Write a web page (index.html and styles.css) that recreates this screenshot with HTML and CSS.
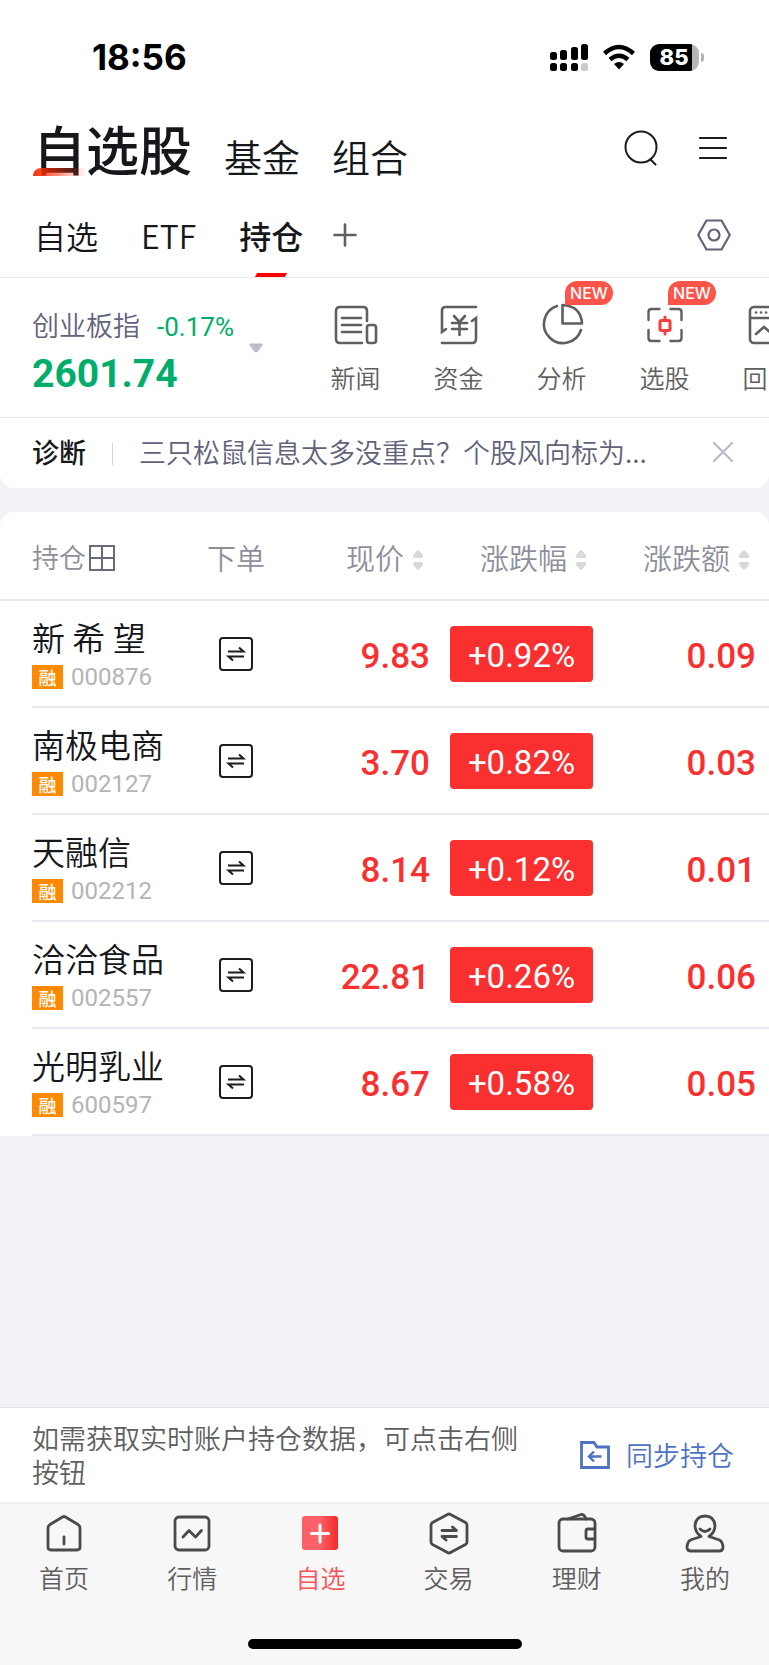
FILE: index.html
```
<!DOCTYPE html>
<html lang="zh-CN">
<head>
    <meta charset="utf-8">
    <meta name="viewport" content="width=device-width, initial-scale=1">

    <title>自选股</title>

    <link rel="stylesheet" href="styles.css">
</head>
<body>
    <!-- shared icons for the table -->
    <svg width="0" height="0" class="sprite">
        <symbol id="order" viewBox="0 0 34 34">
            <rect x="1" y="1" width="32" height="32" rx="3" fill="none" stroke="#1b1c20" stroke-width="2"/>
            <path d="M9 14.500h15.500l-4.500-4M25 19.500H9.500l4.500 4" fill="none" stroke="#1b1c20" stroke-width="2"/>
        </symbol>
        <symbol id="sort" viewBox="0 0 10 20">
            <path d="M3.500 1q1.500-1.300 3 0l3 3.500Q11 8 8 8H2Q-1 8 .5 4.500zM3.500 19q1.500 1.300 3 0l3-3.500Q11 12 8 12H2q-3 0-1.500 3.500z" fill="#d9d9d9"/>
        </symbol>
    </svg>

    <header class="top">
        <div class="status">
            <span class="clock">18:56</span>
            <div class="status-icons">
                <svg width="38" height="28" viewBox="0 0 38 28">
                    <rect x="0" y="9" width="7" height="8" rx="2.500"/>
                    <rect x="10" y="7" width="7" height="10" rx="2.500"/>
                    <rect x="21" y="4" width="7" height="13" rx="2.500"/>
                    <rect x="31" y="1" width="7" height="16" rx="2.500"/>
                    <rect x="0" y="20" width="7" height="8" rx="2.500"/>
                    <rect x="10" y="20" width="7" height="8" rx="2.500"/>
                    <rect x="21" y="20" width="7" height="8" rx="2.500"/>
                    <rect x="31" y="20" width="7" height="8" rx="2.500" fill="#cbcbcb"/>
                </svg>
                <svg width="34" height="26" viewBox="0 0 34 26">
                    <path d="M2.500 9.500Q17-3.500 31.500 9.500M8 15.500q9-7.500 18 0" fill="none" stroke="#000" stroke-width="4.500"/>
                    <path d="M12 20q5-4 10 0l-5 5.500z"/>
                </svg>
                <span class="battery"><span class="battery-body">85</span></span>
            </div>
        </div>

        <div class="titles">
            <nav class="title-tabs">
                <a class="title-tab active" href="#">自选股</a>
                <a class="title-tab" href="#">基金</a>
                <a class="title-tab" href="#">组合</a>
            </nav>
            <button class="icon-btn" aria-label="搜索">
                <svg width="34" height="36" viewBox="0 0 34 36" fill="none" stroke="#1b1c20" stroke-width="2">
                    <circle cx="17" cy="17" r="15.500"/>
                    <path d="M26.500 29.500l5 5" stroke-linecap="round"/>
                </svg>
            </button>
            <button class="icon-btn" aria-label="菜单">
                <svg width="28" height="24" viewBox="0 0 28 24" stroke="#1b1c20" stroke-width="2.200" stroke-linecap="round">
                    <path d="M1 2h26M1 12h26M1 22h26"/>
                </svg>
            </button>
        </div>

        <div class="groups">
            <nav class="group-tabs">
                <a class="group-tab" href="#">自选</a>
                <a class="group-tab" href="#">ETF</a>
                <a class="group-tab active" href="#">持仓</a>
            </nav>
            <button class="icon-btn add" aria-label="添加分组">
                <svg width="24" height="24" viewBox="0 0 24 24" stroke="#5f5f63" stroke-width="2.600" stroke-linecap="round">
                    <path d="M12 1.500v21M1.500 12h21"/>
                </svg>
            </button>
            <button class="icon-btn" aria-label="设置">
                <svg width="34" height="32" viewBox="0 0 34 32" fill="none" stroke="#62627a" stroke-width="2.200" stroke-linejoin="round">
                    <path d="M9.500 1.500h15L32.800 16l-8.300 14.500h-15L1.200 16z"/>
                    <circle cx="17" cy="16" r="5.500"/>
                </svg>
            </button>
        </div>
    </header>

    <section class="market">
        <button class="index">
            <span class="index-text">
                <span class="index-line">创业板指 <span class="index-change">-0.17%</span></span>
                <span class="index-value">2601.74</span>
            </span>
            <svg width="14" height="10" viewBox="0 0 14 10"><path d="M1 .5h12q1.500 1 0 2.500L8.500 8.800q-1.500 1-3 0L1 3Q-.5 1.500 1 .5z" fill="#bcbccb"/></svg>
        </button>
        <nav class="tools">
            <a class="tool" href="#">
                <svg width="44" height="44" viewBox="0 0 44 44" fill="none" stroke="#5f5f5f" stroke-width="2.600" stroke-linecap="round">
                    <path d="M28 40H6q-4 0-4-4V8q0-4 4-4h23q4 0 4 4v10M8 15h19M8 22h19M8 29h19"/>
                    <rect x="33" y="22" width="9" height="18" rx="2.500"/>
                </svg>
                <span>新闻</span>
            </a>
            <a class="tool" href="#">
                <svg width="44" height="44" viewBox="0 0 44 44" fill="none" stroke="#5f5f5f" stroke-width="2.600" stroke-linecap="round">
                    <path d="M39 4H8Q5 4 5 8v21l4-3M5 40h30q4 0 4-4V15l-4 3M17 13l5.500 6 5.500-6M22.500 19v13M15 20h15M15 26h15"/>
                </svg>
                <span>资金</span>
            </a>
            <a class="tool" href="#">
                <svg width="44" height="44" viewBox="0 0 44 44" fill="none" stroke="#5f5f5f" stroke-width="2.600" stroke-linecap="round" stroke-linejoin="round">
                    <path d="M17 3A19 19 0 1 0 41 27M22.500 2v18.500H42Q41 3 22.500 2z"/>
                </svg>
                <span>分析</span>
                <em class="badge">NEW</em>
            </a>
            <a class="tool" href="#">
                <svg width="44" height="44" viewBox="0 0 44 44" fill="none" stroke="#5f5f5f" stroke-width="2.400" stroke-linecap="round">
                    <path d="M5.500 17V9q0-3 3-3h8M27.500 6h8q3 0 3 3v8M38.500 27v8q0 3-3 3h-8M16.500 38h-8q-3 0-3-3v-8"/>
                    <path d="M18.500 17.500h7q1.500 0 1.500 1.500v7q0 1.500-1.500 1.500h-7q-1.500 0-1.500-1.500v-7q0-1.500 1.500-1.500zM22 14v3M22 28v3" stroke="#f93c3c" stroke-width="3"/>
                </svg>
                <span>选股</span>
                <em class="badge">NEW</em>
            </a>
            <a class="tool" href="#">
                <svg width="44" height="44" viewBox="0 0 44 44" fill="none" stroke="#5f5f5f" stroke-width="2.600" stroke-linecap="round">
                    <rect x="4" y="4" width="36" height="36" rx="4"/>
                    <path d="M4 15h36M10 31l8-7 7 6 8-7"/>
                    <path d="M10 9.500h.1M15 9.500h.1M20 9.500h.1"/>
                </svg>
                <span>回</span>
            </a>
        </nav>
    </section>

    <section class="diagnose">
        <strong>诊断</strong>
        <a class="diagnose-text" href="#">三只松鼠信息太多没重点？个股风向标为...</a>
        <button class="icon-btn" aria-label="关闭">
            <svg width="20" height="20" viewBox="0 0 20 20" stroke="#b9b9c9" stroke-width="2.200" stroke-linecap="round"><path d="M1 1l18 18M19 1L1 19"/></svg>
        </button>
    </section>

    <main class="holdings">
        <table>
            <thead>
                <tr>
                    <th class="name">持仓<svg class="grid" width="26" height="26" viewBox="0 0 26 26" fill="none" stroke="#6a6a7c" stroke-width="2"><path d="M1 1h24v24H1zM13 1v24M1 13h24"/></svg></th>
                    <th class="trade">下单</th>
                    <th class="num">现价<svg class="sort" width="10" height="20"><use href="#sort"/></svg></th>
                    <th class="num">涨跌幅<svg class="sort" width="10" height="20"><use href="#sort"/></svg></th>
                    <th class="num last">涨跌额<svg class="sort" width="10" height="20"><use href="#sort"/></svg></th>
                </tr>
            </thead>
            <tbody>
                <tr>
                    <td class="name"><div class="stock">新 希 望</div><div class="code"><span class="tag">融</span>000876</div></td>
                    <td class="trade"><button class="icon-btn" aria-label="下单"><svg width="34" height="34"><use href="#order"/></svg></button></td>
                    <td class="num">9.83</td>
                    <td class="num"><span class="rate">+0.92%</span></td>
                    <td class="num last">0.09</td>
                </tr>
                <tr>
                    <td class="name"><div class="stock">南极电商</div><div class="code"><span class="tag">融</span>002127</div></td>
                    <td class="trade"><button class="icon-btn" aria-label="下单"><svg width="34" height="34"><use href="#order"/></svg></button></td>
                    <td class="num">3.70</td>
                    <td class="num"><span class="rate">+0.82%</span></td>
                    <td class="num last">0.03</td>
                </tr>
                <tr>
                    <td class="name"><div class="stock">天融信</div><div class="code"><span class="tag">融</span>002212</div></td>
                    <td class="trade"><button class="icon-btn" aria-label="下单"><svg width="34" height="34"><use href="#order"/></svg></button></td>
                    <td class="num">8.14</td>
                    <td class="num"><span class="rate">+0.12%</span></td>
                    <td class="num last">0.01</td>
                </tr>
                <tr>
                    <td class="name"><div class="stock">洽洽食品</div><div class="code"><span class="tag">融</span>002557</div></td>
                    <td class="trade"><button class="icon-btn" aria-label="下单"><svg width="34" height="34"><use href="#order"/></svg></button></td>
                    <td class="num">22.81</td>
                    <td class="num"><span class="rate">+0.26%</span></td>
                    <td class="num last">0.06</td>
                </tr>
                <tr>
                    <td class="name"><div class="stock">光明乳业</div><div class="code"><span class="tag">融</span>600597</div></td>
                    <td class="trade"><button class="icon-btn" aria-label="下单"><svg width="34" height="34"><use href="#order"/></svg></button></td>
                    <td class="num">8.67</td>
                    <td class="num"><span class="rate">+0.58%</span></td>
                    <td class="num last">0.05</td>
                </tr>
            </tbody>
        </table>
    </main>

    <footer class="bottom">
        <div class="notice">
            <p>如需获取实时账户持仓数据，可点击右侧按钮</p>
            <button class="sync">
                <svg width="30" height="28" viewBox="0 0 30 28" fill="none" stroke="#4f72c4" stroke-width="2.800">
                    <path d="M1.500 1.500h12.500l3 4.500h11.500v20.500h-27z"/>
                    <path d="M21.500 15.500H10M14 10.500l-5 5 5 5" stroke-width="2.400"/>
                </svg>
                同步持仓
            </button>
        </div>
        <nav class="tabbar">
            <a class="tab" href="#">
                <svg width="44" height="44" viewBox="0 0 44 44" fill="none" stroke="#4a4a4a" stroke-width="2.800" stroke-linecap="round" stroke-linejoin="round">
                    <path d="M6 16q0-2 2-3.500L20.500 5q1.500-1 3 0L36 12.500q2 1.500 2 3.500v19q0 3-3 3H9q-3 0-3-3zM22 25v7"/>
                </svg>
                <span>首页</span>
            </a>
            <a class="tab" href="#">
                <svg width="44" height="44" viewBox="0 0 44 44" fill="none" stroke="#4a4a4a" stroke-width="2.800" stroke-linecap="round" stroke-linejoin="round">
                    <rect x="5" y="5" width="34" height="33" rx="4"/>
                    <path d="M13 25l6-6.500 6.500 6.500 6-6.500"/>
                </svg>
                <span>行情</span>
            </a>
            <a class="tab active" href="#">
                <svg width="44" height="44" viewBox="0 0 44 44">
                    <linearGradient id="plus"><stop offset=".5" stop-color="#fb6166"/><stop offset="1" stop-color="#f22a2a"/></linearGradient>
                    <rect x="4" y="4" width="36" height="34" rx="3" fill="url(#plus)"/>
                    <path d="M22 13v17M13.500 21.500h17" stroke="#fff" stroke-width="3" stroke-linecap="round"/>
                </svg>
                <span>自选</span>
            </a>
            <a class="tab" href="#">
                <svg width="44" height="44" viewBox="0 0 44 44" fill="none" stroke="#4a4a4a" stroke-width="2.800" stroke-linecap="round" stroke-linejoin="round">
                    <path d="M20.500 2.500q1.500-1 3 0l15 8q1.500 1 1.500 2.500v17q0 1.500-1.500 2.500l-15 8q-1.500 1-3 0l-15-8Q4 31.500 4 30V13q0-1.500 1.500-2.500zM15 18.500h14.500L25.500 15M29.500 24.500H15l4 3.500"/>
                </svg>
                <span>交易</span>
            </a>
            <a class="tab" href="#">
                <svg width="44" height="44" viewBox="0 0 44 44" fill="none" stroke="#4a4a4a" stroke-width="2.800" stroke-linecap="round" stroke-linejoin="round">
                    <rect x="4" y="7" width="36" height="32" rx="4"/>
                    <path d="M13 7l13-4.500q3-.5 5 4.500M39 17h-6q-2 0-2 2v6q0 2 2 2h6"/>
                </svg>
                <span>理财</span>
            </a>
            <a class="tab" href="#">
                <svg width="44" height="44" viewBox="0 0 44 44" fill="none" stroke="#4a4a4a" stroke-width="2.800" stroke-linecap="round" stroke-linejoin="round">
                    <path d="M18 24.500q-6-4-6-11Q13 4 22 4t10 9.500q0 7-6 11l10.500 3.500Q40 30 40 36q-.5 3-4 3H8q-3.500 0-4-3 0-6 3.500-8z"/>
                    <path d="M17 17q5 5 10 0"/>
                </svg>
                <span>我的</span>
            </a>
        </nav>
        <div class="home-bar"></div>
    </footer>
</body>
</html>
```

FILE: styles.css
```
* {
    box-sizing: border-box;
}

body {
    margin: 0;
    min-height: 100vh;
    display: flex;
    flex-direction: column;
    background: #f2f3f9;
    color: #16171b;
    font-family: "Noto Sans CJK SC", sans-serif;
    font-weight: 350;
}

a {
    color: inherit;
    text-decoration: none;
}

button {
    margin: 0;
    padding: 0;
    border: 0;
    background: none;
    color: inherit;
    font: inherit;
}

svg {
    display: block;
    flex: none;
}

.sprite {
    position: absolute;
}

/* status bar and headings */

.top {
    background: #fff;
    border-bottom: 1px solid #ebebf3;
}

.status {
    display: flex;
    justify-content: space-between;
    align-items: center;
    height: 112px;
    padding: 2px 65px 0 92px;
}

.clock {
    color: #000;
    font: 700 35px/40px Inter, sans-serif;
}

.status-icons {
    display: flex;
    align-items: center;
    gap: 14px;
}

.battery {
    display: flex;
    align-items: center;
}

.battery::after {
    content: "";
    width: 3px;
    height: 9px;
    margin-left: 2px;
    border-radius: 0 4px 4px 0;
    background: #b5b5b5;
}

.battery-body {
    width: 49px;
    padding-right: 1px;
    border-radius: 9px;
    background: linear-gradient(90deg, #000 42px, #b5b5b5 42px);
    color: #fff;
    font: 800 22px/27px Inter, sans-serif;
    text-align: center;
}

.titles {
    display: flex;
    align-items: center;
    gap: 41px;
    padding: 0 42px 0 33px;
}

.title-tabs {
    display: flex;
    flex: 1;
    align-items: flex-end;
    gap: 32px;
}

.title-tab {
    font-size: 38px;
    line-height: 56px;
}

.title-tab.active {
    position: relative;
    font-size: 53px;
    font-weight: 500;
    line-height: 72px;
}

.title-tab.active::after {
    content: "";
    position: absolute;
    left: 0;
    bottom: 8px;
    width: 54px;
    height: 8px;
    border-radius: 8px 0 0 0;
    background: linear-gradient(90deg, #fb2c04, rgba(251, 44, 4, 0));
}

.groups {
    display: flex;
    align-items: center;
    height: 93px;
    padding: 8px 38px 0 34px;
}

.group-tabs {
    display: flex;
    gap: 43px;
}

.group-tab {
    position: relative;
    font-size: 32px;
    line-height: 84px;
}

.group-tab.active {
    font-weight: 500;
}

.group-tab.active::after {
    content: "";
    position: absolute;
    left: 50%;
    bottom: 0;
    width: 30px;
    height: 4px;
    margin-left: -15px;
    background: #fe0000;
    transform: skewX(-30deg);
}

.add {
    margin: 0 auto 0 30px;
}

/* index quote and tool shortcuts */

.market {
    display: flex;
    background: #fff;
    border-bottom: 1px solid #e4e4ee;
}

.index {
    display: flex;
    flex: none;
    align-items: center;
    gap: 12px;
    width: 304px;
    height: 139px;
    padding-left: 32px;
    text-align: left;
}

.index-text {
    width: 205px;
    padding-top: 8px;
}

.index-line {
    display: flex;
    align-items: baseline;
    gap: 17px;
    color: #62627a;
    font-size: 27px;
    line-height: 40px;
}

.index-change {
    color: #00ad6b;
    font: 400 26px/40px Roboto, sans-serif;
}

.index-value {
    display: block;
    margin-top: 3px;
    color: #00ad6b;
    font: 700 39px/48px Roboto, sans-serif;
}

.tools {
    display: flex;
    flex: 1;
    min-width: 0;
    overflow: hidden;
}

.tool {
    position: relative;
    display: flex;
    flex: none;
    flex-direction: column;
    align-items: center;
    gap: 12px;
    width: 103px;
    padding-top: 25px;
    color: #5f5f5f;
    font-size: 25px;
    line-height: 36px;
}

.tool span {
    width: 50px;
}

.badge {
    position: absolute;
    top: 3px;
    left: 55px;
    width: 48px;
    border-radius: 12px 12px 12px 0;
    background: #fe5349;
    color: #fff;
    font: 500 16px/24px Inter, sans-serif;
    text-align: center;
}

/* diagnosis headline */

.diagnose {
    display: flex;
    align-items: center;
    padding: 0 36px 2px 32px;
    border-radius: 0 0 14px 14px;
    background: #fff;
    font-size: 27px;
    line-height: 68px;
}

.diagnose strong {
    font-weight: 500;
}

.diagnose-text {
    flex: 1;
    min-width: 0;
    overflow: hidden;
    color: #62627a;
    white-space: nowrap;
}

.diagnose-text::before {
    content: "";
    display: inline-block;
    height: 22px;
    margin: 0 26px;
    border-left: 1px solid #d4d4de;
    vertical-align: -2px;
}

/* holdings table */

.holdings {
    margin-top: 24px;
    overflow: hidden;
    border-radius: 14px 14px 0 0;
    background: #fff;
}

table {
    width: 100%;
    table-layout: fixed;
    border-collapse: collapse;
}

th,
td {
    padding: 0;
    background: linear-gradient(#e8e8f1, #e8e8f1) 0 100% / 100% 2px no-repeat;
}

th {
    height: 89px;
    color: #8f8f9b;
    font-size: 29px;
    font-weight: 350;
    line-height: 40px;
}

td {
    height: 107px;
}

.name {
    padding-left: 32px;
    text-align: left;
}

th.name {
    font-size: 27px;
}

td.name {
    padding-bottom: 4px;
    background-position: 32px 100%;
}

.trade {
    width: 62px;
    text-align: center;
}

td.trade {
    padding-bottom: 2px;
}

.num {
    width: 163px;
    padding-top: 4px;
    color: #fa3030;
    font-family: Roboto, sans-serif;
    font-size: 35px;
    font-weight: 500;
    text-align: right;
}

th.num {
    padding: 0 7px 0 0;
    color: #8f8f9b;
    font-family: inherit;
    font-size: 29px;
    font-weight: 350;
}

.num.last {
    width: 176px;
    padding-right: 13px;
}

th.num.last {
    padding-right: 20px;
}

.grid,
.sort {
    display: inline-block;
    margin-left: 9px;
}

.grid {
    margin-left: 3px;
    vertical-align: -3px;
}

.stock {
    margin-bottom: 4px;
    font-size: 33px;
    line-height: 44px;
    white-space: nowrap;
}

.code {
    display: flex;
    align-items: center;
    gap: 8px;
    color: #b4b4b8;
    font: 400 24px/28px Roboto, sans-serif;
}

.tag {
    width: 31px;
    background: #ff8a00;
    color: #fff;
    font: 500 18px/24px "Noto Sans CJK SC", sans-serif;
    text-align: center;
}

.trade .icon-btn {
    display: block;
    margin: 0 auto;
}

.rate {
    display: block;
    width: 143px;
    margin: 0 0 6px auto;
    padding-top: 4px;
    border-radius: 4px;
    background: #fa3030;
    color: #fff;
    font-size: 33px;
    font-weight: 400;
    line-height: 52px;
    text-align: center;
}

/* sync notice and bottom navigation */

.bottom {
    margin-top: auto;
    background: #f7f7f7;
}

.notice {
    display: flex;
    justify-content: space-between;
    align-items: center;
    padding: 13px 35px 13px 32px;
    border-top: 1px solid #e4e4f0;
    border-bottom: 2px solid #efefef;
    background: #fff;
    color: #5f5f5f;
    font-size: 27px;
    line-height: 34px;
}

.notice p {
    max-width: 500px;
    margin: 0;
}

.sync {
    display: flex;
    flex: none;
    align-items: center;
    gap: 16px;
    color: #4f72c4;
}

.tabbar {
    display: flex;
}

.tab {
    display: flex;
    flex: 1;
    flex-direction: column;
    align-items: center;
    gap: 3px;
    padding-top: 8px;
    color: #5f5f5f;
    font-size: 25px;
    line-height: 36px;
}

.tab.active {
    color: #fb5257;
}

.home-bar {
    width: 274px;
    height: 10px;
    margin: 44px auto 16px;
    border-radius: 5px;
    background: #000;
}
```
